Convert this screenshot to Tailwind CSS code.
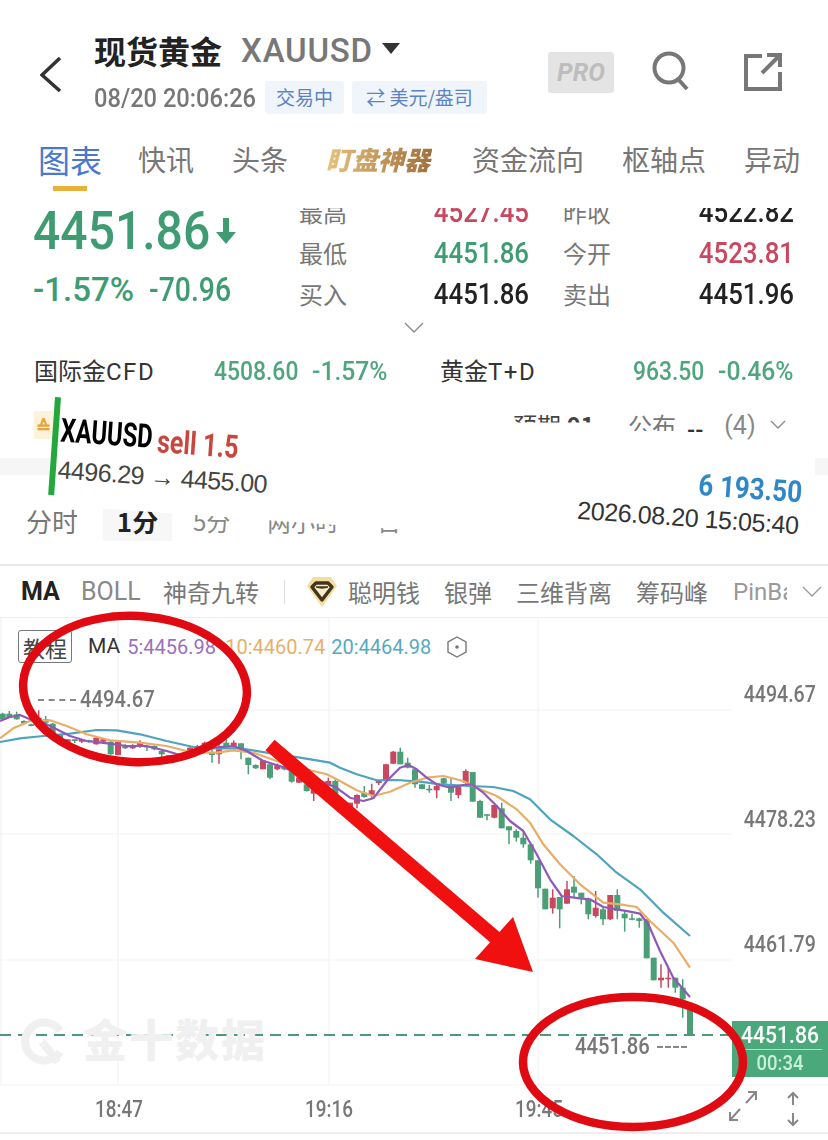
<!DOCTYPE html>
<html lang="zh-CN">
<head>
<meta charset="UTF-8">
<title>现货黄金 XAUUSD</title>
<script src="https://cdn.jsdelivr.net/npm/@tailwindcss/browser@4"></script>
</head>
<body class="bg-white">
<div class="relative w-[828px] h-[1140px] overflow-hidden bg-white font-['Noto_Sans_CJK_SC',sans-serif] text-[#777]">

  <!-- Header -->
  <header class="flex h-[130px] pl-[40px] pt-[32px]">
    <svg class="w-[22px] h-[36px] mt-[24px]" viewBox="0 0 22 36"><polyline points="20,2 2,19 20,35" fill="none" stroke="#333" stroke-width="3.5"/></svg>
    <div class="ml-[32px] w-[454px]">
      <div class="flex items-center h-[36px]">
        <span class="text-[32px] leading-none font-bold text-[#222]">现货黄金</span>
        <span class="ml-[19px] text-[33px] leading-none font-medium font-['Roboto',sans-serif] tracking-[0.8px]">XAUUSD</span>
        <svg class="ml-[9px] mb-[3px] w-[18px] h-[11px]" viewBox="0 0 18 11"><polygon points="0,0 18,0 9,11" fill="#333"/></svg>
      </div>
      <div class="flex items-center mt-[13px]">
        <span class="w-[171px] whitespace-nowrap text-[26px] leading-none font-medium font-['Roboto',sans-serif] origin-left scale-x-[.91]">08/20 20:06:26</span>
        <span class="flex items-center justify-center w-[79px] h-[33px] rounded-[3px] bg-[#f0f5fc] text-[#5b84c4] text-[19px]">交易中</span>
        <span class="flex items-center justify-center ml-[8px] w-[135px] h-[33px] rounded-[3px] bg-[#f0f5fc] text-[#5b84c4] text-[19px] whitespace-nowrap">⇄ 美元/盎司</span>
      </div>
    </div>
    <div class="mt-[20px] flex items-center justify-center w-[66px] h-[41px] rounded-[3px] bg-[#e4e4e4] text-[#bdbdbd] text-[25px] font-bold italic font-['Roboto',sans-serif]">PRO</div>
    <svg class="ml-[37px] mt-[19px] w-[40px] h-[40px]" viewBox="0 0 40 40"><circle cx="18" cy="17" r="14.5" fill="none" stroke="#777" stroke-width="4"/><line x1="27" y1="28" x2="36" y2="38" stroke="#777" stroke-width="4"/></svg>
    <svg class="ml-[52px] mt-[20px] w-[40px] h-[40px]" viewBox="0 0 40 40"><path d="M19 4H3V37H37V20M19 21L36 4M24 3H37V15" fill="none" stroke="#777" stroke-width="4"/></svg>
  </header>

  <!-- Tabs -->
  <nav class="flex items-start h-[65px] -mt-[1px] mb-[1px] pl-[38px] gap-[38px] text-[28px] leading-[60px] whitespace-nowrap">
    <span class="relative text-[32px] text-[#4a78cc] w-[64px]">图表<span class="absolute left-[15px] top-[57px] w-[34px] h-[5px] bg-[#e8b23a]"></span></span>
    <span class="w-[56px] -ml-[2px]">快讯</span>
    <span class="w-[56px]">头条</span>
    <span class="w-[106px] font-black italic text-[26px] text-transparent bg-clip-text bg-gradient-to-r from-[#e8c27e] to-[#a0703c]">盯盘神器</span>
    <span class="w-[112px] ml-[2px]">资金流向</span>
    <span class="w-[84px]">枢轴点</span>
    <span class="w-[56px]">异动</span>
  </nav>

  <!-- Quote -->
  <section class="flex h-[150px] font-['Roboto',sans-serif] font-medium">
    <div class="w-[299px] pl-[33px] text-[#3f9c72]">
      <div class="flex items-center h-[72px]">
        <span class="w-[178px] whitespace-nowrap text-[54px] leading-none origin-left scale-x-[.89]">4451.86</span>
        <svg class="ml-[4px] w-[22px] h-[26px]" viewBox="0 0 22 26"><path d="M8 0H14V14H21L11 26L1 14H8Z" fill="#3f9c72"/></svg>
      </div>
      <div class="flex mt-[6px] text-[33px] leading-none">
        <span class="w-[116px]">-1.57%</span><span class="origin-left scale-x-[.86]">-70.96</span>
      </div>
    </div>
    <div class="mt-[13px] h-[132px] overflow-hidden">
      <div class="-mt-[17px] grid grid-cols-[119px_111px_82px_1fr] w-[495px] auto-rows-[41px] items-center text-[30px]">
        <span class="text-[24px] font-normal font-['Noto_Sans_CJK_SC']">最高</span><span class="text-right text-[#c9485f] origin-right scale-x-[.86]">4527.45</span><span class="pl-[34px] text-[24px] font-normal font-['Noto_Sans_CJK_SC']">昨收</span><span class="text-right text-[#222] origin-right scale-x-[.86]">4522.82</span>
        <span class="text-[24px] font-normal font-['Noto_Sans_CJK_SC']">最低</span><span class="text-right text-[#3f9c72] origin-right scale-x-[.86]">4451.86</span><span class="pl-[34px] text-[24px] font-normal font-['Noto_Sans_CJK_SC']">今开</span><span class="text-right text-[#c9485f] origin-right scale-x-[.86]">4523.81</span>
        <span class="text-[24px] font-normal font-['Noto_Sans_CJK_SC']">买入</span><span class="text-right text-[#222] origin-right scale-x-[.86]">4451.86</span><span class="pl-[34px] text-[24px] font-normal font-['Noto_Sans_CJK_SC']">卖出</span><span class="text-right text-[#222] origin-right scale-x-[.86]">4451.96</span>
      </div>
      <svg class="w-[20px] h-[12px] ml-[105px] mt-[8px]" viewBox="0 0 20 12"><polyline points="1,1 10,10 19,1" fill="none" stroke="#888" stroke-width="1.3"/></svg>
    </div>
  </section>

  <!-- Related quotes -->
  <section class="flex items-center h-[52px] pl-[34px] text-[24px] leading-none whitespace-nowrap">
    <span class="w-[180px] text-[#333]">国际金<span class="font-['Roboto',sans-serif] tracking-[1.5px]">CFD</span></span>
    <span class="w-[98px] text-[#4ea57e] text-[26px] font-medium font-['Roboto',sans-serif] origin-left scale-x-[.88]">4508.60</span>
    <span class="w-[128px] text-[#4ea57e] text-[26px] font-medium font-['Roboto',sans-serif] origin-left scale-x-[.95]">-1.57%</span>
    <span class="w-[193px] text-[#333]">黄金<span class="font-['Roboto',sans-serif] tracking-[1.5px]">T+D</span></span>
    <span class="w-[85px] text-[#4ea57e] text-[26px] font-medium font-['Roboto',sans-serif] origin-left scale-x-[.88]">963.50</span>
    <span class="text-[#4ea57e] text-[26px] font-medium font-['Roboto',sans-serif] origin-left scale-x-[.95]">-0.46%</span>
  </section>

  <!-- Calendar line -->
  <section class="flex items-center h-[56px] pl-[34px] text-[22px] leading-none whitespace-nowrap">
    <span class="flex items-center justify-center w-[19px] h-[28px] bg-[#fdf3da] text-[#e8a33a] text-[18px] font-bold">≙</span>
    <span class="ml-[460px] w-[83px] text-[24px] text-[#444] [clip-path:inset(0_0_60%_0)]">预期 <b class="font-bold">01</b></span>
    <span class="ml-[32px] w-[48px] text-[24px] [clip-path:inset(0_0_25%_0)]">公布</span>
    <span class="ml-[11px] font-bold text-[#333] mt-[4px]">--</span>
    <span class="ml-[21px] text-[25px] text-[#888] font-['Roboto',sans-serif]">(4)</span>
    <svg class="ml-[14px] w-[16px] h-[10px]" viewBox="0 0 16 10"><polyline points="1,1 8,8 15,1" fill="none" stroke="#888" stroke-width="1.3"/></svg>
  </section>
  <div class="flex justify-between h-[17px] mt-[5px] mb-[25px]">
    <div class="w-[50px] bg-[#f6f6f6]"></div><div class="w-[13px] bg-[#f6f6f6]"></div>
  </div>

  <!-- Period row -->
  <section class="flex items-start h-[66px] pl-[26px] text-[26px] leading-none border-b-[2px] border-[#e8e8e8] whitespace-nowrap">
    <span class="mt-[8px] w-[77px]">分时</span>
    <span class="flex items-center justify-center w-[69px] h-[41px] bg-[#f7f7f7] font-bold text-[#222]">1分</span>
    <span class="mt-[9px] ml-[21px] w-[74px] text-[24px] text-[#888]">5分</span>
    <span class="mt-[9px] w-[110px] text-[24px] text-[#888]">两小时</span>
    <span class="mt-[9px] text-[24px] text-[#888]">日</span>
  </section>

  <!-- Indicators -->
  <section class="flex items-center h-[51px] pl-[21px] text-[24px] leading-none whitespace-nowrap">
    <span class="w-[60px] font-bold text-[#222] font-['Roboto',sans-serif] text-[25px]">MA</span>
    <span class="w-[82px] font-['Roboto',sans-serif] text-[25px] text-[#888]">BOLL</span>
    <span class="w-[121px]">神奇九转</span>
    <span class="w-[1px] h-[24px] bg-[#ddd]"></span>
    <svg class="ml-[22px] w-[30px] h-[32px]" viewBox="0 0 30 32"><polygon points="6,1 24,1 30,10 15,31 0,10" fill="#f5dc9f"/><polygon points="9,7 21,7 25,11 15,24 5,11" fill="#f8eccb" stroke="#43351c" stroke-width="3.400" stroke-linejoin="round"/><polygon points="9,11 21,11 15,12" fill="#43351c" stroke="#43351c" stroke-width="1.500"/></svg>
    <span class="ml-[11px] w-[96px]">聪明钱</span>
    <span class="w-[72px]">银弹</span>
    <span class="w-[120px]">三维背离</span>
    <span class="w-[97px]">筹码峰</span>
    <span class="w-[54px] overflow-hidden font-['Roboto',sans-serif] text-[24px] text-[#999]">PinBar</span>
    <svg class="ml-[15px] w-[20px] h-[12px]" viewBox="0 0 20 12"><polyline points="1,1 10,10 19,1" fill="none" stroke="#999" stroke-width="1.3"/></svg>
  </section>

  <!-- Chart -->
  <section class="relative h-[517px] border-t border-b-[2px] border-[#eeeeee]">
    <svg id="chart" class="absolute left-0 top-0 w-[828px] h-[517px] overflow-visible" viewBox="0 617 828 517"></svg>

    <div class="relative flex items-center pt-[12px] pl-[18px] font-['Roboto',sans-serif] text-[20px] leading-none whitespace-nowrap">
      <span class="flex items-center justify-center w-[54px] h-[33px] rounded-[3px] border border-[#777] text-[#444] text-[22px] font-['Noto_Sans_CJK_SC']">教程</span>
      <span class="ml-[16px] text-[#333] text-[21px]">MA</span>
      <span class="ml-[7px] w-[98px] text-[#9a6fc0]">5:4456.98</span>
      <span class="w-[106px] text-[#e6b06c]">10:4460.74</span>
      <span class="w-[116px] text-[#55aabf]">20:4464.98</span>
      <svg class="w-[20px] h-[22px]" viewBox="0 0 20 22"><polygon points="10,1 19,6 19,16 10,21 1,16 1,6" fill="none" stroke="#777" stroke-width="1.4"/><circle cx="10" cy="11" r="1.800" fill="#777"/></svg>
    </div>

    <div class="absolute left-[38px] top-[70px] flex items-center gap-[4px] text-[23px] leading-none font-medium font-['Roboto',sans-serif]">
      <span class="w-[38px] border-t-[2px] border-dashed border-[#888]"></span><span class="origin-left scale-x-[.88]">4494.67</span>
    </div>
    <div class="absolute right-[12px] top-[65px] text-[23px] leading-none font-medium font-['Roboto',sans-serif] origin-right scale-x-[.85]">4494.67</div>
    <div class="absolute right-[12px] top-[190px] text-[23px] leading-none font-medium font-['Roboto',sans-serif] origin-right scale-x-[.85]">4478.23</div>
    <div class="absolute right-[12px] top-[315px] text-[23px] leading-none font-medium font-['Roboto',sans-serif] origin-right scale-x-[.85]">4461.79</div>

    <div class="absolute left-[83px] top-[398px] text-[#f0f0f0] text-[44px] leading-none font-black tracking-[2px]">金十数据</div>
    <svg class="absolute left-[20px] top-[398px] w-[48px] h-[52px]" viewBox="0 0 48 52"><path d="M40 36A19 19 0 1 1 40 15M22 26L38 46" fill="none" stroke="#f0f0f0" stroke-width="8"/></svg>

    <div class="absolute left-[575px] top-[417px] flex items-center text-[23px] leading-none font-medium font-['Roboto',sans-serif]">
      <span class="w-[82px] origin-left scale-x-[.88]">4451.86</span><span class="w-[30px] border-t-[2px] border-dashed border-[#888]"></span>
    </div>

    <div class="absolute right-0 top-[403px] w-[96px] h-[56px] bg-[#4aa87a] text-center font-medium font-['Roboto',sans-serif]">
      <div class="h-[29px] text-[24px] leading-[29px] text-white border-b border-white/60 scale-x-[.88]">4451.86</div>
      <div class="text-[21px] leading-[27px] text-[#c8f0d8] scale-x-[.88]">00:34</div>
    </div>

    <div class="absolute left-[95px] top-[480px] text-[23px] leading-none font-medium font-['Roboto',sans-serif] origin-left scale-x-[.82]">18:47</div>
    <div class="absolute left-[305px] top-[480px] text-[23px] leading-none font-medium font-['Roboto',sans-serif] origin-left scale-x-[.82]">19:16</div>
    <div class="absolute left-[515px] top-[480px] text-[23px] leading-none font-medium font-['Roboto',sans-serif] origin-left scale-x-[.82]">19:45</div>

    <svg class="absolute left-[728px] top-[471px] w-[30px] h-[34px]" viewBox="0 0 30 34"><path d="M28 3L18 14M20 3H28V11M2 31L12 20M2 23V31H10" fill="none" stroke="#888" stroke-width="2"/></svg>
    <svg class="absolute left-[785px] top-[473px] w-[16px] h-[36px]" viewBox="0 0 16 36"><path d="M8 14V2M3 7L8 2L13 7M8 22V34M3 29L8 34L13 29" fill="none" stroke="#888" stroke-width="2"/></svg>
  </section>

  <!-- Pasted order card, tilted on top of the page -->
  <div class="absolute left-[55px] top-[397px] w-[670px] h-[108px] bg-white origin-top-left rotate-[4deg] whitespace-nowrap">
    <div class="absolute left-0 top-0 w-[6px] h-[98px] bg-[#22a83c]"></div>
    <div class="absolute left-[8px] top-[16px] text-[33px] leading-none font-bold text-black font-['Roboto',sans-serif] origin-left scale-x-[.72]">XAUUSD</div>
    <div class="absolute left-[105px] top-[21px] text-[32px] leading-none font-bold text-[#c9453d] font-['Roboto',sans-serif] origin-left scale-x-[.78]">sell 1.5</div>
    <div class="absolute left-[8px] top-[60px] text-[25px] leading-none text-[#444] font-['Liberation_Sans',sans-serif] tracking-[-0.6px]">4496.29 → 4455.00</div>
    <div class="absolute left-[648px] top-[28px] text-[30px] leading-none font-bold text-[#2f87c9] font-['Roboto',sans-serif] origin-left scale-x-[.87]">6 193.50</div>
    <div class="absolute left-[529px] top-[64px] text-[25px] leading-none text-[#333] font-['Liberation_Sans',sans-serif] tracking-[-0.4px]">2026.08.20 15:05:40</div>
  </div>

  <!-- Hand-drawn red marks -->
  <svg class="absolute left-0 top-0 w-[828px] h-[1140px] pointer-events-none" viewBox="0 0 828 1140">
    <ellipse cx="135" cy="689" rx="112" ry="73" transform="rotate(3 135 689)" fill="none" stroke="#e00a12" stroke-width="8.5"/>
    <ellipse cx="633" cy="1062" rx="110" ry="65" fill="none" stroke="#e00a12" stroke-width="8.5"/>
    <line x1="270" y1="745" x2="497" y2="939" stroke="#f01010" stroke-width="14"/>
    <polygon points="513,917 475,959 533,972" fill="#f01010"/>
  </svg>
</div>

<script>
  // candles were read off the screenshot: [x, bodyTop, bodyBottom, wickTop, wickBottom, colour]
  // crop A has origin 0,610 and crop B has origin 340,720, both at 3x
  const cropA = [
    [1050,575,595,575,595,'r'],[1006,510,550,505,555,'g'],[985,510,525,500,528,'r'],[941,520,548,505,570,'r'],
    [920,520,540,515,542,'g'],[897,500,515,490,516,'r'],[875,480,512,480,515,'g'],[853,465,475,460,478,'g'],
    [832,462,475,458,478,'r'],[810,460,500,460,505,'g'],[789,448,475,448,475,'r'],[767,462,472,460,474,'g'],
    [745,440,462,440,490,'g'],[723,397,415,397,445,'g'],[701,395,405,388,406,'r'],[679,395,405,385,410,'g'],
    [657,415,430,395,458,'r'],[636,425,432,395,455,'g'],[614,395,410,392,412,'r'],[592,405,420,402,422,'r'],
    [570,410,430,408,432,'r'],[506,432,445,432,446,'g'],[485,420,430,415,438,'g'],[463,405,415,403,418,'g'],
    [441,405,408,405,420,'g'],[420,395,408,388,410,'r'],[398,402,412,400,414,'r'],[376,402,412,400,414,'g'],
    [354,390,432,388,433,'r'],[332,392,430,390,431,'g'],[310,385,392,384,393,'r'],[289,380,400,378,401,'r'],
    [267,388,393,386,395,'g'],[245,385,392,384,396,'r'],[224,385,390,385,396,'g'],[203,385,392,384,398,'r'],
    [180,372,392,370,393,'g'],[158,338,372,336,374,'g'],[137,325,335,315,340,'g'],[116,320,335,298,336,'r'],
    [94,340,345,338,346,'g'],[72,330,337,328,340,'g'],[50,310,325,302,326,'g'],[28,308,320,300,321,'g'],[8,308,325,305,326,'g']
  ];
  const cropB = [
    [1050,845,940,845,940,'g'],[1028,800,835,775,890,'g'],[1006,770,800,770,815,'g'],[985,770,775,740,800,'r'],
    [963,770,778,730,800,'r'],[941,710,778,710,778,'g'],[920,595,712,595,712,'g'],[898,592,600,590,620,'g'],
    [876,592,596,578,598,'g'],[854,578,592,570,632,'g'],[832,522,570,505,595,'g'],[811,522,595,522,597,'r'],
    [789,565,595,560,612,'g'],[767,560,585,510,590,'r'],[745,535,580,530,595,'g'],[724,515,530,515,550,'g'],
    [702,497,515,465,530,'g'],[681,505,548,480,548,'r'],[659,528,565,528,622,'g'],[638,530,562,505,578,'r'],
    [616,503,565,503,565,'g'],[594,418,502,418,530,'g'],[572,370,418,365,428,'g'],[550,350,370,330,380,'g'],
    [529,330,350,325,362,'g'],[507,316,328,316,370,'g'],[485,262,322,245,322,'g'],[463,252,290,252,292,'r'],
    [441,280,284,280,298,'g'],[420,240,290,236,291,'g'],[398,153,242,153,242,'g'],[377,150,185,145,190,'r'],
    [355,198,222,195,232,'r'],[333,192,215,170,240,'g'],[311,172,188,170,190,'g'],[290,195,208,192,232,'r'],
    [268,203,208,192,215,'g'],[246,190,204,190,205,'g'],[225,145,190,145,200,'g'],[203,125,140,110,142,'g'],
    [181,92,130,80,130,'g'],[160,92,128,90,129,'r'],[138,130,178,128,179,'r'],[116,178,186,176,192,'r'],
    [95,208,222,188,232,'r'],[73,215,228,195,230,'g'],[51,222,248,220,262,'r'],[29,250,265,248,266,'r']
  ];
  const fromA = (x, y) => [+(x / 3).toFixed(1), +(610 + y / 3).toFixed(1)];
  const fromB = (x, y) => [+(340 + x / 3).toFixed(1), +(720 + y / 3).toFixed(1)];

  const purple = [[0,330],[30,318],[60,312],[90,325],[130,335],[170,355],[210,375],[260,390],[330,398],[380,405],[440,405],[500,420],[550,435],[590,430],[640,410],[700,405],[740,420],[790,450],[840,465],[900,490],[960,510],[1010,530]].map(p => fromA(...p))
    .concat([[0,208],[30,230],[70,240],[100,232],[140,180],[180,140],[205,132],[230,145],[260,170],[290,190],[330,200],[370,192],[395,190],[430,215],[470,255],[510,300],[550,330],[590,400],[630,475],[665,525],[720,532],[750,535],[790,558],[830,565],[870,572],[900,578],[925,610],[960,690],[1000,770],[1050,828]].map(p => fromB(...p)));
  const orange = [[0,382],[40,352],[90,330],[150,328],[200,345],[260,370],[330,388],[420,395],[500,405],[580,425],[650,425],[700,418],[760,425],[830,450],[900,470],[980,490]].map(p => fromA(...p))
    .concat([[0,180],[50,208],[100,225],[150,212],[210,185],[260,170],[310,165],[370,180],[420,205],[470,225],[530,265],[570,305],[610,370],[660,430],[720,490],[790,545],[840,550],[890,558],[930,600],[1000,665],[1050,740]].map(p => fromB(...p)));
  const blue = [[0,393],[60,382],[130,375],[210,368],[290,357],[350,358],[420,370],[500,390],[580,408],[650,412],[720,412],[800,425],[900,440],[990,455]].map(p => fromA(...p))
    .concat([[0,140],[50,160],[110,178],[170,177],[240,182],[300,190],[390,195],[460,198],[520,210],[570,235],[630,295],[700,345],[770,400],[830,455],[900,505],[970,575],[1050,645]].map(p => fromB(...p)));

  let out = '';
  // grid
  [118, 329, 538].forEach(x => { out += `<line x1="${x}" y1="617" x2="${x}" y2="1084" stroke="#f0f0f0"/>`; });
  [709, 833, 959].forEach(y => { out += `<line x1="0" y1="${y}" x2="732" y2="${y}" stroke="#f3f3f3"/>`; });
  out += '<line x1="1" y1="617" x2="1" y2="1084" stroke="#eeeeee"/>';
  out += '<line x1="0" y1="1084" x2="828" y2="1084" stroke="#f3f3f3"/>';
  out += '<line x1="0" y1="1034" x2="732" y2="1034" stroke="#4d9a78" stroke-width="2" stroke-dasharray="11 7"/>';

  const candle = (c, map) => {
    const [x, top] = map(c[0], c[1]);
    const bottom = map(c[0], c[2])[1];
    const wickTop = map(c[0], c[3])[1];
    const wickBottom = map(c[0], c[4])[1];
    const fill = c[5] === 'g' ? '#4a9f76' : '#c9485f';
    out += `<line x1="${x}" y1="${wickTop}" x2="${x}" y2="${wickBottom}" stroke="${fill}" stroke-width="1.500"/>`;
    out += `<rect x="${x - 3}" y="${top}" width="6" height="${Math.max(bottom - top, 1.5).toFixed(1)}" fill="${fill}"/>`;
  };
  cropA.forEach(c => candle(c, fromA));
  cropB.forEach(c => candle(c, fromB));

  const line = (pts, colour) => {
    out += `<polyline points="${pts.map(p => p.join(',')).join(' ')}" fill="none" stroke="${colour}" stroke-width="2.200" stroke-linejoin="round"/>`;
  };
  line(blue, '#4fa3bd');
  line(orange, '#e8ae68');
  line(purple, '#9058b8');

  document.getElementById('chart').innerHTML = out;
</script>
</body>
</html>
